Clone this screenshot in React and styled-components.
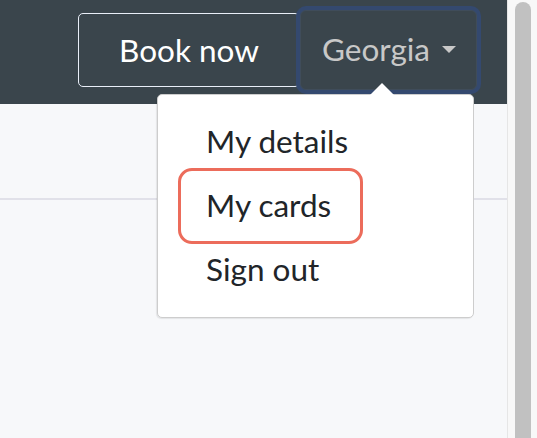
import React from "react";
import styled, { createGlobalStyle } from "styled-components";

const Global = createGlobalStyle`
  html, body { margin: 0; padding: 0; }
  body { overflow: hidden; font-family: Lato, "Open Sans", sans-serif; background: #f7f8fa; }
`;

const Screen = styled.div`
  display: flex;
  width: 537px;
  height: 438px;
  overflow: hidden;
`;

const Main = styled.div`
  flex: 1;
  display: flex;
  flex-direction: column;
  background: #f7f8fa;
`;

const Navbar = styled.nav`
  height: 104px;
  box-sizing: border-box;
  background: #3a454c;
  display: flex;
  justify-content: flex-end;
  align-items: center;
  padding: 0 30px 4px 0;
`;

const Header = styled.div`
  height: 94px;
  border-bottom: 2px solid #e1e1e9;
`;

const Content = styled.div`
  flex: 1;
`;

const BookButton = styled.button`
  width: 222px;
  height: 74px;
  box-sizing: border-box;
  background: transparent;
  border: 1.5px solid #e9eef8;
  border-radius: 5px;
  color: #ffffff;
  font-family: Lato, sans-serif;
  font-size: 31.5px;
  padding: 0;
`;

const UserMenu = styled.div`
  position: relative;
`;

const UserButton = styled.button`
  height: 80px;
  width: 177px;
  box-sizing: border-box;
  background: #3a454c;
  border: 1px solid #3f4c5a;
  border-radius: 6px;
  box-shadow: 0 0 0 4px #34496f;
  color: #c8c8c8;
  font-family: Lato, sans-serif;
  font-size: 31.5px;
  display: flex;
  align-items: center;
  justify-content: flex-start;
  gap: 12px;
  padding: 0 0 2px 21px;
`;

const Caret = styled.span`
  width: 0;
  height: 0;
  border-left: 7.5px solid transparent;
  border-right: 7.5px solid transparent;
  border-top: 7.5px solid #c8c8c8;
  margin-top: 0;
`;

const Dropdown = styled.div`
  position: absolute;
  top: 84px;
  right: 3px;
  width: 317px;
  height: 224px;
  box-sizing: border-box;
  background: #ffffff;
  border: 1px solid #cdcdcd;
  border-radius: 5px;
  box-shadow: -1px 1px 1px rgba(0, 0, 0, 0.08);
  padding: 14px 0;
  z-index: 2;

  &::before {
    content: "";
    position: absolute;
    top: -12px;
    left: 212px;
    border-left: 12px solid transparent;
    border-right: 12px solid transparent;
    border-bottom: 12px solid #ffffff;
  }
`;

const Item = styled.div`
  position: relative;
  height: 64px;
  line-height: 64px;
  padding-left: 48px;
  font-family: Lato, sans-serif;
  font-size: 31.5px;
  color: #212529;

  ${(p) =>
    p.$highlight &&
    `
    &::before {
      content: "";
      position: absolute;
      left: 20px;
      top: -5px;
      width: 185px;
      height: 76px;
      box-sizing: border-box;
      border: 3px solid #ec6c5b;
      border-radius: 14px;
    }
  `}
`;

const ScrollTrack = styled.div`
  width: 30px;
  box-sizing: border-box;
  background: #f8f8f8;
  border-left: 1px solid #e6e6e6;
  padding: 2px 6px 0 7px;
`;

const Thumb = styled.div`
  width: 16px;
  height: 480px;
  background: #c1c1c1;
  border-radius: 8px 8px 0 0;
`;

export default function App() {
  return (
    <>
      <Global />
      <Screen>
        <Main>
          <Navbar>
            <BookButton>Book now</BookButton>
            <UserMenu>
              <UserButton>
                Georgia <Caret />
              </UserButton>
              <Dropdown>
                <Item>My details</Item>
                <Item $highlight>My cards</Item>
                <Item>Sign out</Item>
              </Dropdown>
            </UserMenu>
          </Navbar>
          <Header />
          <Content />
        </Main>
        <ScrollTrack>
          <Thumb />
        </ScrollTrack>
      </Screen>
    </>
  );
}
